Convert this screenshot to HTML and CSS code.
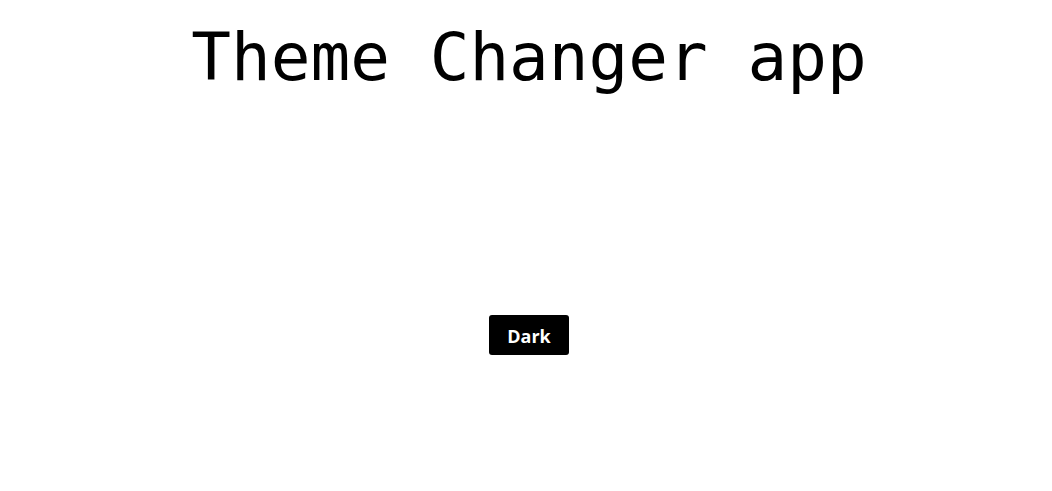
FILE: index.html
```html
<!DOCTYPE html>
<html>
<head>
<meta charset="utf-8">
<link rel="stylesheet" href="styles.css">
</head>
<body>
<div class="app">
  <h1 class="title">Theme Changer app</h1>
  <div class="controls">
    <button class="theme-btn">Dark</button>
  </div>
</div>
</body>
</html>
```
FILE: styles.css
```css
html, body {
  margin: 0;
  padding: 0;
  background: #ffffff;
}
.app {
  display: flex;
  flex-direction: column;
  align-items: center;
  padding-left: 6px;
}
.title {
  margin: 18px 0 0 0;
  font-family: "DejaVu Sans Mono", "Liberation Mono", monospace;
  font-weight: 400;
  font-size: 66px;
  line-height: 80px;
  color: #000;
}
.controls {
  margin-top: 217px;
  display: flex;
  justify-content: center;
}
.theme-btn {
  width: 80px;
  height: 40px;
  background: #000;
  color: #fff;
  border: none;
  border-radius: 3px;
  font-family: "Open Sans", "Noto Sans", sans-serif;
  font-weight: 700;
  font-size: 18px;
  padding: 2px 0 0 0;
  cursor: pointer;
}
```
